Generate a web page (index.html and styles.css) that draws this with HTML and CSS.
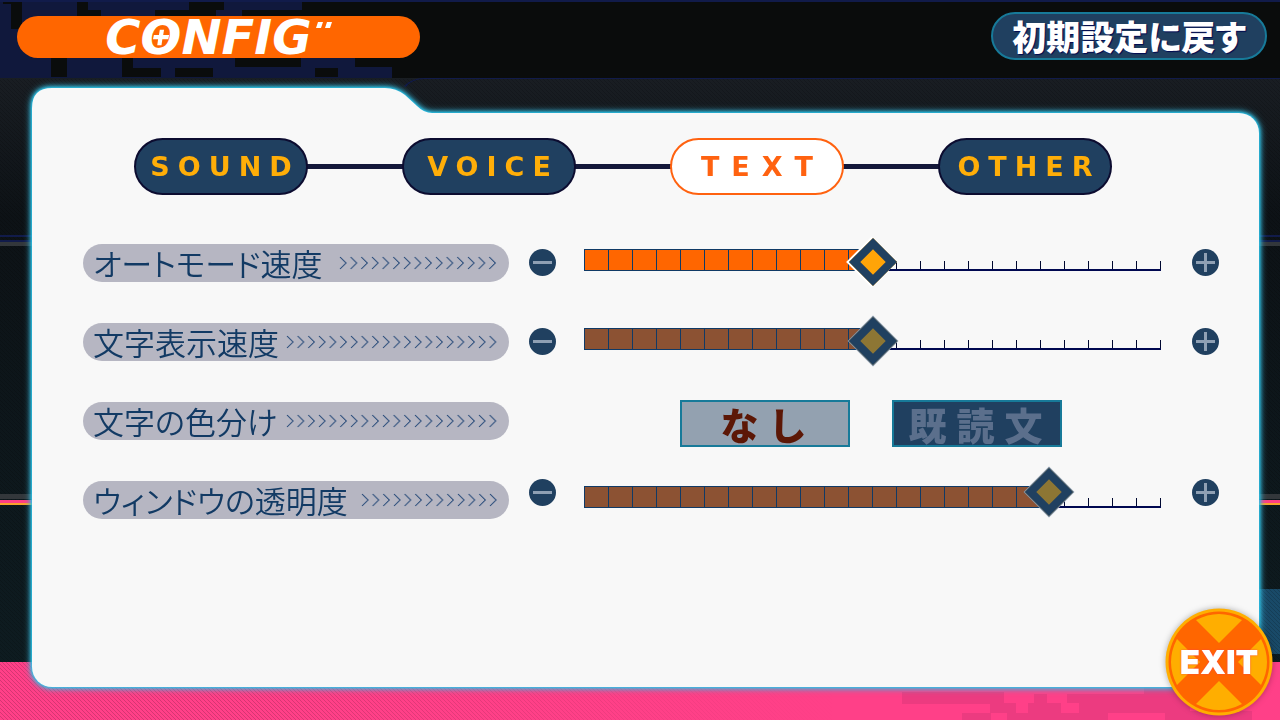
FILE: index.html
```html
<!DOCTYPE html>
<html lang="ja">
<head>
<meta charset="utf-8">
<title>CONFIG</title>
<meta name="viewport" content="width=device-width, initial-scale=1">
<link rel="stylesheet" href="styles.css">
</head>
<body>
<svg class="backdrop" viewBox="0 0 1280 720" preserveAspectRatio="none" aria-hidden="true">
  <defs>
    <linearGradient id="night" x1="0" y1="0" x2="0" y2="1">
      <stop offset="0" stop-color="#20242a"/><stop offset=".3" stop-color="#0d1216"/><stop offset="1" stop-color="#0e1d22"/>
    </linearGradient>
    <linearGradient id="fade" x1="0" y1="0" x2="1" y2="0">
      <stop offset="0" stop-color="#fff"/><stop offset=".3" stop-color="#fff"/><stop offset="1" stop-color="#000"/>
    </linearGradient>
    <mask id="fade-mask"><rect y="662" width="840" height="58" fill="url(#fade)"/></mask>
    <pattern id="hatch" width="4" height="4" patternUnits="userSpaceOnUse">
      <path d="M-1 -1L5 5M-1 3L1 5M3 -1L5 1" stroke="#000" stroke-opacity=".16" stroke-width="1"/>
    </pattern>
  </defs>
  <rect width="1280" height="720" fill="url(#night)"/>
  <rect width="1280" height="78" fill="#0a0c0c"/>
  <path fill="#10183c" d="M0 0H302V10H242V16H392V78H0Z"/>
  <path fill="#0a0c0c" d="M3 2H22V29H11V4H3ZM77 2H88V10H101V16H77ZM189 2H224V10H216V16H155V10H189ZM51 58H67V77H51ZM122 58H133V68H161V77H122ZM175 68H213V77H175ZM235 58H301V67H235ZM315 68H338V77H315ZM355 58H392V67H355Z"/>
  <path fill="#111b4a" d="M0 0H1280V2H0ZM404 86Q412 78 424 78H1280V79H424Q412 79 406 87Z"/>
  <path fill="url(#hatch)" d="M0 79H1280V662H0Z"/>
  <path fill="#111b4a" d="M0 235H1280V237H0ZM0 240H1280V242H0Z"/>
  <path fill="#33373b" d="M0 242H1280V246H0ZM0 494H1280V499H0Z"/>
  <path fill="#ff3f83" d="M0 500H1280V504H0Z"/>
  <path fill="#f9a12b" d="M0 503H1280V505H0Z"/>
  <path fill="#194a68" d="M1255 589H1280V654H1255Z"/>
  <path fill="url(#hatch)" d="M1255 589H1280V654H1255Z"/>
  <path fill="#ff4088" d="M0 662H1280V720H0Z"/>
  <path fill="#ec3b80" d="M902 692H1004V703H1016V713H1028V703H1034V694H1047V703H1061V713H1079V703H1067V694H1144V687H1190V720H1165V713H1108V720H1007V713H990V704H902ZM962 713H991V720H962ZM1190 711H1252V720H1190Z"/>
  <path fill="url(#hatch)" mask="url(#fade-mask)" d="M0 662H840V720H0Z"/>
</svg>

<header class="topbar">
  <h1 class="title">
    <span>C</span><span class="title-o">O<svg viewBox="0 0 20 20" aria-hidden="true"><path d="M8 1H13L12 7H19L18 12H11L10 19H5L6 12H0L1 7H7Z"/></svg></span><span>NFIG</span><svg class="title-ticks" viewBox="0 0 16 6" aria-hidden="true"><path d="M2 0H7L5 6H0ZM11 0H16L14 6H9Z"/></svg>
  </h1>
  <button class="reset" type="button">初期設定に戻す</button>
</header>

<main class="panel">
  <svg class="panel-tab" viewBox="0 0 400 25" aria-hidden="true"><path d="M0 25V20Q0 0 20 0H353Q364 0 373 7L385 18Q392 25 400 25Z"/></svg>
  <div class="panel-body">
    <nav class="tabs" aria-label="CONFIG">
      <button class="tab" type="button">SOUND</button>
      <button class="tab" type="button">VOICE</button>
      <button class="tab tab-active" type="button" aria-current="page">TEXT</button>
      <button class="tab" type="button">OTHER</button>
    </nav>

    <svg class="defs" aria-hidden="true">
      <defs>
        <pattern id="chevrons" width="10.667" height="14" patternUnits="userSpaceOnUse">
          <path d="M3 1L9 7L3 13" fill="none" stroke="#123a6e" stroke-width="1"/>
        </pattern>
      </defs>
    </svg>

    <section class="settings">
      <div class="row">
        <label class="caption" for="auto-speed">オートモード速度<svg class="arrows" width="160" height="14" aria-hidden="true"><rect width="160" height="14" fill="url(#chevrons)"/></svg></label>
        <div class="control">
          <button class="step" type="button" aria-label="−"><svg viewBox="0 0 27 27"><path d="M4 13.5H23"/></svg></button>
          <div class="slider" style="--value:50%">
            <div class="rail"></div><div class="fill"></div>
            <input id="auto-speed" type="range" min="0" max="100" step="any" value="50">
          </div>
          <button class="step step-plus" type="button" aria-label="+"><svg viewBox="0 0 27 27"><path d="M4 13.5H23M13.5 4V23"/></svg></button>
        </div>
      </div>

      <div class="row dim">
        <label class="caption" for="text-speed">文字表示速度<svg class="arrows" width="213" height="14" aria-hidden="true"><rect width="213" height="14" fill="url(#chevrons)"/></svg></label>
        <div class="control">
          <button class="step" type="button" aria-label="−"><svg viewBox="0 0 27 27"><path d="M4 13.5H23"/></svg></button>
          <div class="slider" style="--value:50%">
            <div class="rail"></div><div class="fill"></div>
            <input id="text-speed" type="range" min="0" max="100" step="any" value="50">
          </div>
          <button class="step step-plus" type="button" aria-label="+"><svg viewBox="0 0 27 27"><path d="M4 13.5H23M13.5 4V23"/></svg></button>
        </div>
      </div>

      <div class="row">
        <div class="caption" id="color-label">文字の色分け<svg class="arrows" width="213" height="14" aria-hidden="true"><rect width="213" height="14" fill="url(#chevrons)"/></svg></div>
        <div class="control">
          <div class="options" role="group" aria-labelledby="color-label">
            <button class="option option-on" type="button" aria-pressed="true">なし</button>
            <button class="option" type="button" aria-pressed="false">既読文</button>
          </div>
        </div>
      </div>

      <div class="row dim raised">
        <label class="caption" for="opacity">ウィンドウの透明度<svg class="arrows" width="138" height="14" aria-hidden="true"><rect width="138" height="14" fill="url(#chevrons)"/></svg></label>
        <div class="control">
          <button class="step" type="button" aria-label="−"><svg viewBox="0 0 27 27"><path d="M4 13.5H23"/></svg></button>
          <div class="slider" style="--value:80.6%">
            <div class="rail"></div><div class="fill"></div>
            <input id="opacity" type="range" min="0" max="100" step="any" value="80.6">
          </div>
          <button class="step step-plus" type="button" aria-label="+"><svg viewBox="0 0 27 27"><path d="M4 13.5H23M13.5 4V23"/></svg></button>
        </div>
      </div>
    </section>
  </div>
</main>

<button class="exit" type="button">
  <svg viewBox="0 0 108 108" aria-hidden="true">
    <circle cx="54" cy="54" r="53.5" fill="#ffae00"/>
    <circle cx="54" cy="54" r="50.5" fill="#ff6600"/>
    <path fill="#ffae00" d="M54 35L31 12Q54 0 77 12ZM54 73L31 96Q54 108 77 96ZM35 54L12 31Q0 54 12 77ZM73 54L96 31Q108 54 96 77Z"/>
  </svg>
  <span>EXIT</span>
</button>
</body>
</html>
```

FILE: styles.css
```css
* { box-sizing: border-box; }

body {
  margin: 0;
  min-height: 100vh;
  display: flex;
  flex-direction: column;
  position: relative;
  background: #0d1216;
  font-family: "Noto Sans CJK JP", sans-serif;
}

button {
  margin: 0;
  padding: 0;
  border: 0;
  font-family: inherit;
  cursor: pointer;
}

.backdrop {
  position: absolute;
  inset: 0;
  width: 100%;
  height: 100%;
  z-index: -1;
}

.topbar {
  display: flex;
  align-items: center;
  justify-content: space-between;
  height: 72px;
  padding: 0 13px 0 17px;
}

.title {
  display: flex;
  align-items: center;
  justify-content: center;
  width: 403px;
  height: 42px;
  margin: 2px 0 0;
  border-radius: 21px;
  background: #ff6600;
  color: #fff;
  font: italic bold 48px/42px "DejaVu Sans", sans-serif;
}

.title-o { position: relative; }

.title-o svg {
  position: absolute;
  left: 12px;
  top: 13px;
  width: 17px;
  height: 17px;
  fill: #fff;
}

.title-ticks {
  align-self: flex-start;
  width: 16px;
  height: 6px;
  margin: 6px 0 0 4px;
  fill: #fff;
}

.reset {
  width: 276px;
  height: 48px;
  border: 2px solid #177a99;
  border-radius: 24px;
  background: #204060;
  color: #fff;
  font-size: 34px;
  font-weight: 900;
  line-height: 42px;
  font-feature-settings: "palt";
  text-shadow: 1px 1px 1px #000850;
}

.panel {
  flex: 1;
  display: flex;
  flex-direction: column;
  margin: 16px 21px 33px 32px;
  filter: drop-shadow(0 0 1px #20c8f0) drop-shadow(0 0 2px #30c8f0) drop-shadow(0 0 3px #38b4d4);
}

.panel-tab {
  display: block;
  width: 400px;
  height: 25px;
  fill: #f8f8f8;
}

.panel-body {
  flex: 1;
  padding: 25px 40px 0 51px;
  border-radius: 0 20px 20px 20px;
  background: #f8f8f8;
}

.tabs {
  display: flex;
  justify-content: space-between;
  margin: 0 107px 49px 51px;
  background: linear-gradient(#14183a, #14183a) center / calc(100% - 40px) 5px no-repeat;
}

.tab {
  width: 174px;
  height: 57px;
  padding-left: 8px;
  border: 2px solid #0c0c30;
  border-radius: 29px;
  background: #204060;
  color: #ffae08;
  font: bold 27px/53px "DejaVu Sans", sans-serif;
  letter-spacing: 8px;
}

.tab-active {
  padding-left: 12px;
  border-color: #ff6210;
  background: #fff;
  color: #ff6210;
  letter-spacing: 12px;
}

.defs {
  display: block;
  width: 0;
  height: 0;
}

.settings {
  display: grid;
  gap: 41px;
}

.row {
  display: grid;
  grid-template: 38px / 426px 1fr;
  align-items: center;
  gap: 20px;
}

.caption {
  display: flex;
  align-items: center;
  justify-content: space-between;
  height: 38px;
  padding: 0 12px 0 10px;
  border-radius: 19px;
  background: #b6b6c2;
  color: #123a64;
  font-size: 31px;
  font-weight: 350;
  line-height: 38px;
  font-feature-settings: "palt";
  white-space: nowrap;
}

.control {
  display: grid;
  grid-template-columns: 27px 1fr 30px;
  align-items: center;
  gap: 28px;
}

.step {
  width: 27px;
  height: 27px;
  margin-bottom: 2px;
  border-radius: 50%;
  background: #204060;
}

.step-plus { justify-self: end; }

.step svg {
  display: block;
  fill: none;
  stroke: #8fa0b4;
  stroke-width: 3;
}

.slider {
  display: grid;
  align-items: center;
}

.rail,
.fill,
.slider input { grid-area: 1 / 1; }

.rail,
.fill {
  height: 22px;
  margin-bottom: 6px;
}

.rail {
  border-bottom: 2px solid #000850;
  background: linear-gradient(90deg, #000830 1px, transparent 1px) 0 100% / calc((100% - 1px) / 24) 8px repeat-x;
}

.fill {
  border: solid #103a66;
  border-width: 1px 0;
  background: linear-gradient(90deg, #103a66 1px, #ff6600 1px) 0 0 / calc((100% - 1px) / 24) 100%;
  clip-path: inset(0 calc(100% - var(--value)) 0 0);
}

.slider input {
  appearance: none;
  width: calc(100% + 34px);
  height: 50px;
  margin: -6px -17px;
  background: none;
}

.slider input::-webkit-slider-thumb {
  appearance: none;
  width: 34px;
  height: 34px;
  margin-bottom: 2px;
  border: 8px solid #204060;
  background: #ffa408;
  box-shadow: -1px 1px 0 1px #fff;
  transform: rotate(45deg);
}

.dim .fill { background-image: linear-gradient(90deg, #103a66 1px, #8c5233 1px); }

.dim .slider input::-webkit-slider-thumb {
  background: #8d7634;
  box-shadow: 0 0 0 1px #7f92a6;
}

.raised .step,
.raised .slider input::-webkit-slider-thumb { margin-bottom: 16px; }

.options {
  grid-column: 2;
  display: flex;
  justify-content: center;
  gap: 42px;
  margin: 4px 4px 0 0;
}

.option {
  width: 170px;
  height: 47px;
  padding-left: 8px;
  border: 2px solid #177a99;
  background: #204060;
  color: #5b6f8c;
  font-size: 38px;
  font-weight: 900;
  line-height: 43px;
  letter-spacing: 10px;
}

.option-on {
  background: #93a1b0;
  color: #5c1706;
}

.exit {
  position: absolute;
  right: 7px;
  bottom: 4px;
  display: grid;
  place-items: center;
  width: 108px;
  height: 108px;
  border-radius: 50%;
  background: none;
  filter: drop-shadow(0 0 3px rgba(0, 0, 0, .3));
}

.exit svg,
.exit span { grid-area: 1 / 1; }

.exit svg {
  width: 108px;
  height: 108px;
}

.exit span {
  color: #fff;
  font: 900 33px/40px Inter, sans-serif;
  text-shadow: 0 0 2px #ff3c50;
}
```
